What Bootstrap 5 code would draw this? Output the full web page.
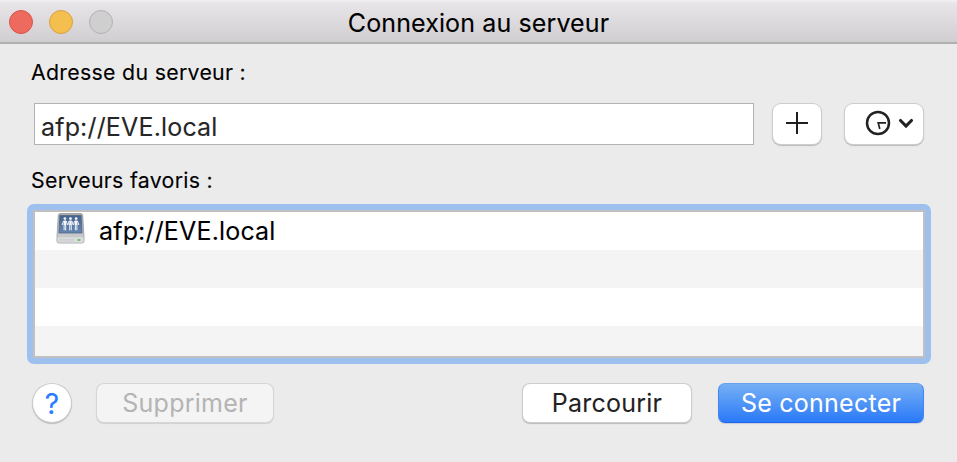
<!DOCTYPE html>
<html lang="fr">
<head>
<meta charset="utf-8">
<meta name="viewport" content="width=device-width, initial-scale=1">
<title>Connexion au serveur</title>
<link href="https://cdn.jsdelivr.net/npm/bootstrap@5.3.0/dist/css/bootstrap.min.css" rel="stylesheet">
<style>
body{font-family:Inter,"Liberation Sans",sans-serif;font-size:25px;color:#000;background:#ebebeb;height:462px;overflow:hidden;line-height:38px;-webkit-text-stroke:.1px}
.titlebar{height:44px;background:linear-gradient(#f4f3f4 0,#e7e5e7 3px,#d0ced0 42px);border-bottom:2px solid #b1b0b1}
.lights{left:9px;top:10px;gap:16px}
.light{width:24px;height:24px;border-radius:50%;border:1px solid}
.light-close{background:#ee6a5f;border-color:#d6544b}
.light-min{background:#f5bf4f;border-color:#d9a03c}
.light-off{background:#d0cfd0;border-color:#b3b2b3}
.window-title{letter-spacing:.12px;padding-top:4px}
.content{padding:0 26px 0 27px}
.field-label{font-size:21.3px;padding-left:4px;letter-spacing:.3px}
.label-address{line-height:56px;height:59px}
.label-favorites{height:59px;line-height:48px;padding-top:11px}
.address-row{padding:0 7px;height:42px}
.address{width:720px;height:42px;border:1px solid #b2b2b2;border-radius:0;padding:5px 6px 0;font-size:25px;line-height:34px;letter-spacing:.17px;color:#262626;background:#fff;-webkit-text-stroke:.1px}
.address:focus{box-shadow:none}
.push{height:40px;padding:0;border:0;border-radius:7px;background:#fff;color:#222;font-size:25px;line-height:40px;letter-spacing:.25px;-webkit-text-stroke:.05px;box-shadow:0 0 0 1px #cdcdcd,0 1px 1px 1px #bbb}
.push:hover{background:#fff;color:#222}
.push-add{width:48px;margin-left:19px;border-radius:8px}
.push-recent{width:78px;margin-left:24px;border-radius:8px}
.favorites{height:160px;border:6px solid #9dc0ee;border-radius:7px}
.fav-list{height:148px;border:2px solid #c1c0be;background:#fff;overflow:hidden}
.fav-row{height:38px;padding-left:21px;gap:14px;letter-spacing:.17px}
.fav-row:nth-child(even){background:#f4f4f4}
.actions{margin-top:19px;height:40px;padding:0 7px 0 6px}
.help{width:38px;height:38px;border-radius:50%;color:#2a7bff;font-size:28px;line-height:40px;-webkit-text-stroke:.15px}
.help:hover{color:#2a7bff}
.push-remove,.push-remove:disabled{width:176px;margin-left:26px;background:#f4f4f4;color:#b4b4b4;opacity:1;height:38px;line-height:38px;box-shadow:0 0 0 1px #d6d6d6,0 1px 1px 1px #d0d0d0}
.push-browse{width:168px;height:38px;line-height:38px}
.push-connect,.push-connect:hover{width:206px;margin-left:27px;color:#fff;background:linear-gradient(#76b0f5,#2a79f8);border:1px solid;border-color:#66a1ee #4087f2 #1f66ee;line-height:38px;box-shadow:0 1px 1px #c6cbd6}
svg{display:block}
</style>
</head>
<body>
<header class="titlebar position-relative text-center">
  <div class="lights position-absolute d-flex"><span class="light light-close"></span><span class="light light-min"></span><span class="light light-off"></span></div>
  <div class="window-title">Connexion au serveur</div>
</header>
<main class="content">
  <label class="field-label label-address d-block" for="address">Adresse du serveur :</label>
  <div class="address-row d-flex align-items-center">
    <input id="address" class="form-control address flex-shrink-0" type="text" value="afp://EVE.local">
    <button class="btn push push-add flex-shrink-0" type="button" aria-label="Ajouter">
      <svg width="48" height="40" viewBox="0 0 48 40" stroke="#1e1e1e" stroke-width="2"><path d="M13 19H35M24 8V30"/></svg>
    </button>
    <button class="btn push push-recent flex-shrink-0" type="button" aria-label="Serveurs récents">
      <svg width="78" height="40" viewBox="0 0 78 40" fill="none" stroke="#222"><circle cx="33" cy="19" r="11" stroke-width="2.5"/><path d="M41 18.800H33.200L34.800 25" stroke-width="1.700"/><path d="M55.500 16.500L61 22L66.500 16.500" stroke-width="3.100" stroke-linecap="round"/></svg>
    </button>
  </div>
  <div class="field-label label-favorites">Serveurs favoris :</div>
  <div class="favorites">
    <div class="fav-list">
      <div class="fav-row d-flex align-items-center">
        <svg width="29" height="32" viewBox="0 0 30 32" preserveAspectRatio="none" class="mb-1">
          <defs>
            <linearGradient id="metal" x2="0" y2="1"><stop stop-color="#a7aaae"/><stop offset="1" stop-color="#d2d3d4"/></linearGradient>
            <linearGradient id="screen" x2="0" y2="1"><stop stop-color="#45638f"/><stop offset="1" stop-color="#6686b1"/></linearGradient>
          </defs>
          <path d="M4 .5H26Q27.500 .5 27.700 3L29 24.500V28Q29 30 27 30H3Q1 30 1 28V24.500L2.300 3Q2.500 .5 4 .5Z" fill="url(#metal)" stroke="#96999c" stroke-width=".8"/>
          <path d="M4 2.500H26L27 20H3Z" fill="url(#screen)" stroke="#49627f" stroke-width=".7"/>
          <path d="M1.500 24.500H28.500V28Q28.500 29.500 27 29.500H3Q1.500 29.500 1.500 28Z" fill="#dcdddd"/>
          <path d="M3 26.500H19M3 28H19" stroke="#c4c6c7" stroke-width=".6"/>
          <rect x="22" y="26" width="3.500" height="2" rx="1" fill="#7fba78"/>
          <g fill="#f4f7fa" stroke="#f4f7fa">
            <g id="person"><circle cx="9.200" cy="5.600" r="1.400" stroke="none"/><path d="M7.900 7.500H10.500V12H7.900Z" stroke="none"/><path d="M7.800 8L6.400 12M10.600 8L12 12M8.400 11.500V17.300M10 11.500V17.300" fill="none" stroke-width="1"/></g>
            <use href="#person" x="5.800"/><use href="#person" x="11.600"/>
          </g>
        </svg>
        <span>afp://EVE.local</span>
      </div>
      <div class="fav-row"></div><div class="fav-row"></div><div class="fav-row"></div>
    </div>
  </div>
  <div class="actions d-flex align-items-center">
    <button class="btn push help" type="button">?</button>
    <button class="btn push push-remove" type="button" disabled>Supprimer</button>
    <button class="btn push push-browse ms-auto" type="button">Parcourir</button>
    <button class="btn push push-connect" type="button">Se connecter</button>
  </div>
</main>
<script src="https://cdn.jsdelivr.net/npm/bootstrap@5.3.0/dist/js/bootstrap.bundle.min.js"></script>
</body>
</html>
